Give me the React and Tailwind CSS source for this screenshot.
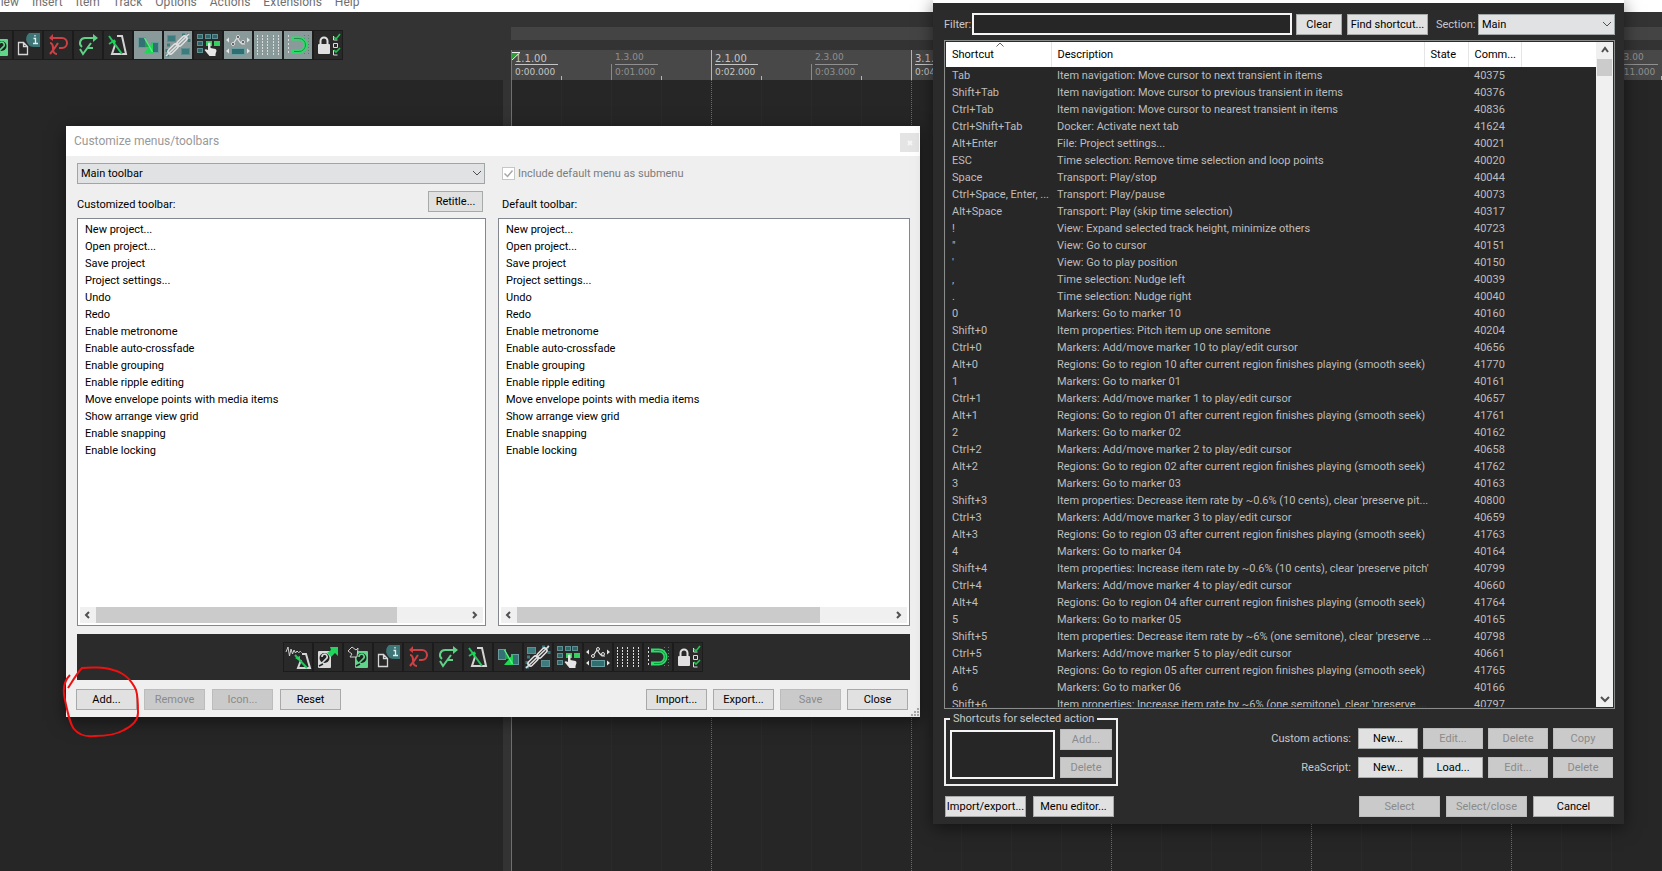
import React from "react";

/* ---------- toolbar icons (28 x 28 cells) ---------- */

const Metronome = () => (
  <g fill="none">
    <path d="M13 5h5l4 18H8l3-9" stroke="#d4d4d4" strokeWidth="2" />
    <path d="M5 5l13 18M5 13l6-4" stroke="#22c55e" strokeWidth="2" />
    <path d="M8 9l4 1-2 5z" fill="#1fd655" />
  </g>
);

const Disk = ({ color, x }) => (
  <g>
    <rect x={x} y="8" width="13" height="17" rx="1" fill={color} />
    <circle cx={x + 6.5} cy="15" r="5" fill="#222" />
    <path d={`M${x + 4} 14a2.6 2.6 0 1 1 4 2l-4 4`} fill="none" stroke={color} strokeWidth="1.600" />
    <path d={`M${x + 1} 23l4-2`} stroke="#222" strokeWidth="1.500" />
  </g>
);

const icons = {
  "New project": (
    <g fill="none">
      <path d="M2 9l2-5 1.500 9 1.500-7 1.500 5 1.500-4 1.500 3 1.500-2 1.500 1.500 2-1 1 1" stroke="#cfcfcf" />
      <path d="M18 11h4l4 14H14l3-8" stroke="#d4d4d4" strokeWidth="2" />
      <path d="M11 12l12 13" stroke="#22c55e" strokeWidth="2" />
      <path d="M11 15l5-2 0 5z" fill="#1fd655" />
    </g>
  ),
  "Open project": (
    <g>
      <Disk color="#d9d9d9" x={4} />
      <path d="M16 4h8v9l-3-3-4 4-4-4 4-3z" fill="#22d45b" />
    </g>
  ),
  "Save project": (
    <g>
      <Disk color="#5fd68a" x={11} />
      <path d="M13 14H6l2-3-4-3 4-4 4 3 2-2z" fill="#2a2a2a" stroke="#cfcfcf" />
    </g>
  ),
  "Project settings": (
    <g>
      <path d="M4.500 11.500h5l4 4v8h-9z M9.500 11.500v4h4" fill="none" stroke="#d6d6d6" strokeWidth="1.300" />
      <path d="M15 2h11v14h-5a8 8 0 0 1-6-14z" fill="#3e7678" />
      <path d="M19.500 7.500h2v5M19 12.500h5M21 4v1.500" fill="none" stroke="#e3f0f0" strokeWidth="1.300" />
    </g>
  ),
  Undo: (
    <g fill="none" stroke="#cf4045" strokeWidth="2">
      <path d="M6 7h12a5 5 0 0 1 0 10h-3" />
      <path d="M9 3l-4 4 4 3z" fill="#cf4045" stroke="none" />
      <path d="M6 12q3 0 3 5.500t4 5.500M14 12q-3 5-8 11" />
    </g>
  ),
  Redo: (
    <g fill="none" stroke="#5fd287" strokeWidth="2">
      <path d="M21 7H11a5 5 0 0 0-3 9" />
      <path d="M19 3l5 4-5 4z" fill="#5fd287" stroke="none" />
      <path d="M6 18l3 5 8-11M14 17h5" />
    </g>
  ),
  Metronome: <Metronome />,
  "Auto-crossfade": (
    <g>
      <rect x="4.500" y="6.500" width="7" height="10" fill="#337174" stroke="#69999b" />
      <rect x="17.500" y="11.500" width="7" height="10" fill="#337174" stroke="#69999b" />
      <path d="M10 22l9-11v11z" fill="#1fd655" />
      <path d="M11 7v9h5z" fill="#1fa545" />
      <path d="M10.500 7l8 14" stroke="#5ff08a" strokeWidth="1.300" />
    </g>
  ),
  Grouping: (
    <g>
      <g fill="#3c7c7e" stroke="#5b9092">
        <rect x="3.500" y="4.500" width="8" height="6" />
        <rect x="17.500" y="17.500" width="8" height="6" />
      </g>
      <path d="M18 4h7M25 8v4M3 18v6h4M3 14h3" stroke="#3c7c7e" strokeWidth="3" strokeDasharray="3 2" fill="none" />
      <g fill="none" stroke="#e0e0e0">
        <path d="M2 25L25 3" strokeWidth="1.600" />
        <rect x="3" y="15.500" width="12" height="5" rx="2.500" transform="rotate(-45 9 18)" strokeWidth="1.600" />
        <rect x="12" y="7.500" width="12" height="5" rx="2.500" transform="rotate(-45 18 10)" strokeWidth="1.600" />
      </g>
    </g>
  ),
  "Ripple editing": (
    <g>
      <g fill="#2f6668" stroke="#5f8f92">
        <rect x="3.500" y="3.500" width="5" height="4" />
        <rect x="11.500" y="3.500" width="5" height="4" />
        <rect x="18.500" y="3.500" width="5" height="4" />
        <rect x="3.500" y="10.500" width="5" height="4" />
        <rect x="3.500" y="17.500" width="5" height="4" />
      </g>
      <path d="M12 10h6v5h-6zM20 10h6v5h-6z" fill="#35d160" />
      <path d="M14 12q1.500-1 2.500 0v5l5 1q1 .5 1 2l-1 3v2h-6l-5-6q1-1.500 3.500 0z" fill="#e6e6e6" />
    </g>
  ),
  "Envelope points": (
    <g>
      <path d="M7 13h2l4-6 3 4 2 2h3" fill="none" stroke="#e2e2e2" strokeWidth="1.200" />
      <g fill="#333" stroke="#e2e2e2">
        <circle cx="9" cy="13" r="1.500" />
        <circle cx="14" cy="6" r="1.500" />
        <circle cx="19" cy="11" r="1.500" />
      </g>
      <path d="M5 6.500v5L2 9zM23 6.500v5l3-2.500zM5 17.500v5L2 20zM23 17.500v5l3-2.500z" fill="#e6e6e6" />
      <rect x="7.500" y="17.500" width="13" height="6" fill="#2f6f72" stroke="#6b9fa1" />
    </g>
  ),
  Grid: (
    <path
      d="M3.500 4v20M8.500 4v20M13.500 4v20M19.500 4v20M24.500 4v20"
      stroke="#dcdcdc"
      strokeDasharray="2 1"
      fill="none"
    />
  ),
  Snapping: (
    <g fill="none">
      <path d="M4.500 4v20" stroke="#dcdcdc" strokeDasharray="2 2" />
      <path d="M20.500 4v20M24.500 4v20" stroke="#4f8564" strokeDasharray="1 2" />
      <path d="M7 7.500h8a6 6 0 0 1 0 13H7" stroke="#2edb68" strokeWidth="4" />
      <path d="M10 7.500h5a6 6 0 0 1 0 13h-5" stroke="#1f8f48" />
    </g>
  ),
  Locking: (
    <g fill="none">
      <rect x="4" y="13" width="12" height="10" rx="1" fill="#e0e0e0" />
      <path d="M6.500 13v-3a3.500 3.500 0 0 1 7 0v3" stroke="#e0e0e0" strokeWidth="2" />
      <path d="M19.500 5v4h4M19.500 12.500h4v4h-4zM19.500 19v5h4" stroke="#dcdcdc" />
      <path d="M20 6l2 2 4-5M20 19l2 2 4-4" stroke="#26c153" strokeWidth="1.600" />
    </g>
  ),
};

const iconNames = Object.keys(icons);
const lit = ["Auto-crossfade", "Grouping", "Envelope points", "Grid", "Snapping"];

function IconButton({ name, active }) {
  return (
    <button
      type="button"
      aria-label={name}
      className={`h-7 w-7 shrink-0 ${active ? "bg-[#8a9a9a]" : "bg-[#292929]"}`}
    >
      <svg viewBox="0 0 28 28" className="block h-7 w-7">
        {icons[name]}
      </svg>
    </button>
  );
}

/* ---------- shared controls ---------- */

function Btn({ children, disabled, className = "w-[61px]" }) {
  return (
    <button
      type="button"
      disabled={disabled}
      className={`h-[21px] shrink-0 border text-center leading-[19px] whitespace-nowrap ${
        disabled ? "border-[#bcbcbc] bg-[#cacaca] text-[#8b8b8b]" : "border-[#a8aaaa] bg-[#e1e1e1] text-black"
      } ${className}`}
    >
      {children}
    </button>
  );
}

function Chevron({ d, className = "h-4 w-4", width = 1 }) {
  return (
    <svg viewBox="0 0 16 16" className={className} fill="none" stroke="#505050" strokeWidth={width}>
      <path d={d} />
    </svg>
  );
}
const DOWN = "M4 6l4 4 4-4";
const UP = "M5 10l3-4 3 4";
const LEFT = "M9 5L6 8l3 3";
const RIGHT = "M6 5l3 3-3 3";

function Dropdown({ id, label, value, className }) {
  return (
    <div className={`relative ${className}`}>
      <select
        id={id}
        aria-label={label}
        className="block h-[21px] w-full appearance-none border border-[#a0a5a6] bg-[#e1e2e3] pl-[3px] text-black"
      >
        <option>{value}</option>
      </select>
      <Chevron d={DOWN} className="pointer-events-none absolute top-[2px] right-0 h-4 w-4" />
    </div>
  );
}

/* ---------- arrange view behind the windows ---------- */

const menus = ["View", "Insert", "Item", "Track", "Options", "Actions", "Extensions", "Help"];
const measures = [1, 2, 3, 4, 5, 6];

function RulerHalf({ beat, time, major }) {
  return (
    <div
      className={`relative flex h-full w-[100px] shrink-0 items-end ${major ? "border-l border-[#b5b5b5]" : ""}`}
    >
      {!major && <span className="h-4 w-px bg-[#8a8a8a]" />}
      <span
        className={`ml-[3px] flex h-full w-[43px] flex-col pt-1 leading-none ${
          major ? "text-[#c4c4c4]" : "text-[#909090]"
        }`}
      >
        <span className={`h-[10px] ${major ? "text-[10px] leading-[10px]" : "text-[9px] leading-[6px]"}`}>{beat}</span>
        <span className="h-px bg-current" />
        <span className="pt-[2px] text-[9px] leading-[11px]">{time}</span>
      </span>
      <span className="ml-[3px] h-1 w-px bg-[#b5b5b5]" />
    </div>
  );
}

function Workspace() {
  return (
    <div className="flex min-h-screen flex-col bg-[#262626]">
      <nav className="h-3 overflow-hidden bg-white font-[Roboto,'Noto_Sans',sans-serif] text-[12px] leading-[16px] text-[#6f6f6f]">
        <ul className="-mt-[6px] -ml-[7px] flex gap-[13px]">
          {menus.map((m) => (
            <li key={m}>{m}</li>
          ))}
        </ul>
      </nav>
      <div className="flex grow">
        <div className="flex w-[503px] shrink-0 flex-col">
          <div className="flex h-[68px] items-start overflow-hidden bg-[#333]">
            <div className="mt-[18px] -ml-[17px] flex gap-[2px] bg-[#1c1c1c] p-px">
              {iconNames.slice(2).map((n) => (
                <IconButton key={n} name={n} active={lit.includes(n)} />
              ))}
            </div>
          </div>
        </div>
        <div className="w-2 shrink-0 bg-[#333]" />
        <div className="flex min-w-0 grow flex-col overflow-hidden font-['DejaVu_Sans',sans-serif]">
          <div className="h-[38px] bg-[#333] pt-[15px]">
            <div className="h-[13px] bg-[#444]" />
          </div>
          <div className="relative flex h-[30px] bg-[#484848]">
            {measures.map((m) => (
              <React.Fragment key={m}>
                <RulerHalf major beat={`${m}.1.00`} time={`0:${String(m * 2 - 2).padStart(2, "0")}.000`} />
                <RulerHalf beat={`${m}.3.00`} time={`0:${String(m * 2 - 1).padStart(2, "0")}.000`} />
              </React.Fragment>
            ))}
            <svg className="absolute top-[2px] left-0 h-2 w-[10px]" viewBox="0 0 10 8">
              <path d="M0 0h9L0 8z" fill="#2f9e3a" />
              <path d="M0 .5h9L1 8" fill="none" stroke="#f0f0f0" />
            </svg>
            <span className="absolute top-0 left-0 h-full w-px bg-[#27b427]" />
          </div>
          <div className="flex grow">
            {measures.map((m) => (
              <div
                key={m}
                className={`flex w-[200px] shrink-0 border-l ${
                  m === 1 ? "border-[#1fa81f]" : "border-dotted border-[#6a6a6a]"
                }`}
              >
                <div className="grow border-r border-[#2a2a2a]" />
                <div className="grow border-r border-[#2a2a2a]" />
                <div className="grow border-r border-[#2a2a2a]" />
                <div className="grow" />
              </div>
            ))}
          </div>
        </div>
      </div>
    </div>
  );
}

/* ---------- Customize menus/toolbars ---------- */

const toolbarItems = [
  "New project...",
  "Open project...",
  "Save project",
  "Project settings...",
  "Undo",
  "Redo",
  "Enable metronome",
  "Enable auto-crossfade",
  "Enable grouping",
  "Enable ripple editing",
  "Move envelope points with media items",
  "Show arrange view grid",
  "Enable snapping",
  "Enable locking",
];

function ItemList() {
  return (
    <div className="flex h-[408px] flex-col justify-between border border-[#828790] bg-white p-[2px]">
      <ul className="pl-[5px]">
        {toolbarItems.map((t) => (
          <li key={t} className="h-[17px] leading-[17px]">
            {t}
          </li>
        ))}
      </ul>
      <div className="flex h-4 items-center bg-[#f0f0f0]">
        <Chevron d={LEFT} width={2} />
        <div className="flex h-full grow">
          <div className="h-full w-[81%] bg-[#cbcbcb]" />
        </div>
        <Chevron d={RIGHT} width={2} />
      </div>
    </div>
  );
}

function CustomizeWindow() {
  return (
    <section className="absolute top-[126px] left-[66px] w-[854px] bg-[#efefef] text-black shadow-[0_4px_16px_rgba(0,0,0,0.5)]">
      <header className="flex h-[30px] items-center justify-between bg-white pr-px pl-2">
        <h2 className="font-[Roboto,'Noto_Sans',sans-serif] text-[12px] text-[#999]">Customize menus/toolbars</h2>
        <button type="button" aria-label="Close window" className="mt-[3px] flex h-[19px] w-[19px] items-center justify-center bg-[#e4e4e4]">
          <svg viewBox="0 0 8 8" className="h-2 w-2" stroke="#f6f6f6" strokeWidth="2">
            <path d="M2 2l4 4M6 2L2 6" />
          </svg>
        </button>
      </header>
      <div className="pt-[7px] pr-[10px] pb-[7px] pl-[11px]">
        <div className="grid grid-cols-[409px_1fr] gap-x-3">
          <Dropdown label="Menu or toolbar" value="Main toolbar" className="w-[408px]" />
          <label className="flex items-center gap-[3px] pl-1 text-[#7c7c7c]">
            <input type="checkbox" defaultChecked disabled className="peer sr-only" />
            <svg viewBox="0 0 13 13" className="h-[13px] w-[13px]" fill="none">
              <rect x="0.500" y="0.500" width="12" height="12" fill="#fff" stroke="#c6c6c6" />
              <path d="M2.500 6.500l3 3 5-6" stroke="#a8a8a8" strokeWidth="1.500" />
            </svg>
            Include default menu as submenu
          </label>
          <div className="flex h-[34px] items-center justify-between pr-[3px]">
            <h3 className="pt-[6px]">Customized toolbar:</h3>
            <Btn className="w-[55px]">Retitle...</Btn>
          </div>
          <h3 className="flex h-[34px] items-center pt-[6px] pl-1">Default toolbar:</h3>
          <ItemList />
          <ItemList />
        </div>
        <div className="mt-2 flex h-[46px] items-center justify-center bg-[#2b2b2b] pr-[2px]">
          <div className="flex gap-[2px] bg-[#1c1c1c] p-px">
            {iconNames.map((n) => (
              <IconButton key={n} name={n} />
            ))}
          </div>
        </div>
        <div className="mt-[9px] -ml-px flex justify-between pr-[2px]">
          <div className="flex gap-[7px]">
            <Btn>Add...</Btn>
            <Btn disabled>Remove</Btn>
            <Btn disabled>Icon...</Btn>
            <Btn>Reset</Btn>
          </div>
          <div className="flex gap-[6px]">
            <Btn>Import...</Btn>
            <Btn>Export...</Btn>
            <Btn disabled>Save</Btn>
            <Btn>Close</Btn>
          </div>
        </div>
      </div>
      <svg viewBox="0 0 9 9" className="absolute right-0 bottom-0 h-[9px] w-[9px]" fill="#a9a9a9">
        <path d="M6 0h2v2H6zM3 3h2v2H3zM6 3h2v2H6zM0 6h2v2H0zM3 6h2v2H3zM6 6h2v2H6z" />
      </svg>
      <svg viewBox="0 0 80 74" className="pointer-events-none absolute top-[538px] -left-1 h-[74px] w-20" fill="none" stroke="#ee1111" strokeWidth="2">
        <path d="M8 11C2 17 0 24 3 36c3 14 5 24 9 29 4 5 10 8 20 7 10 0 22-1 30-6 10-5 14-10 14-17 0-8 0-17-2-23-5-11-14-18-23-20C42 3 28 3 20 4c-4 4-7 9-14 20" />
      </svg>
    </section>
  );
}

/* ---------- Actions ---------- */

const seek = "after current region finishes playing (smooth seek)";
const actions = [
  ["Tab", "Item navigation: Move cursor to next transient in items", "40375"],
  ["Shift+Tab", "Item navigation: Move cursor to previous transient in items", "40376"],
  ["Ctrl+Tab", "Item navigation: Move cursor to nearest transient in items", "40836"],
  ["Ctrl+Shift+Tab", "Docker: Activate next tab", "41624"],
  ["Alt+Enter", "File: Project settings...", "40021"],
  ["ESC", "Time selection: Remove time selection and loop points", "40020"],
  ["Space", "Transport: Play/stop", "40044"],
  ["Ctrl+Space, Enter, ...", "Transport: Play/pause", "40073"],
  ["Alt+Space", "Transport: Play (skip time selection)", "40317"],
  ["!", "View: Expand selected track height, minimize others", "40723"],
  ['"', "View: Go to cursor", "40151"],
  ["'", "View: Go to play position", "40150"],
  [",", "Time selection: Nudge left", "40039"],
  [".", "Time selection: Nudge right", "40040"],
  ["0", "Markers: Go to marker 10", "40160"],
  ["Shift+0", "Item properties: Pitch item up one semitone", "40204"],
  ["Ctrl+0", "Markers: Add/move marker 10 to play/edit cursor", "40656"],
  ["Alt+0", `Regions: Go to region 10 ${seek}`, "41770"],
  ["1", "Markers: Go to marker 01", "40161"],
  ["Ctrl+1", "Markers: Add/move marker 1 to play/edit cursor", "40657"],
  ["Alt+1", `Regions: Go to region 01 ${seek}`, "41761"],
  ["2", "Markers: Go to marker 02", "40162"],
  ["Ctrl+2", "Markers: Add/move marker 2 to play/edit cursor", "40658"],
  ["Alt+2", `Regions: Go to region 02 ${seek}`, "41762"],
  ["3", "Markers: Go to marker 03", "40163"],
  ["Shift+3", "Item properties: Decrease item rate by ~0.6% (10 cents), clear 'preserve pit...", "40800"],
  ["Ctrl+3", "Markers: Add/move marker 3 to play/edit cursor", "40659"],
  ["Alt+3", `Regions: Go to region 03 ${seek}`, "41763"],
  ["4", "Markers: Go to marker 04", "40164"],
  ["Shift+4", "Item properties: Increase item rate by ~0.6% (10 cents), clear 'preserve pitch'", "40799"],
  ["Ctrl+4", "Markers: Add/move marker 4 to play/edit cursor", "40660"],
  ["Alt+4", `Regions: Go to region 04 ${seek}`, "41764"],
  ["5", "Markers: Go to marker 05", "40165"],
  ["Shift+5", "Item properties: Decrease item rate by ~6% (one semitone), clear 'preserve ...", "40798"],
  ["Ctrl+5", "Markers: Add/move marker 5 to play/edit cursor", "40661"],
  ["Alt+5", `Regions: Go to region 05 ${seek}`, "41765"],
  ["6", "Markers: Go to marker 06", "40166"],
  ["Shift+6", "Item properties: Increase item rate by ~6% (one semitone), clear 'preserve ...", "40797"],
];

function ActionTable() {
  return (
    <div className="mt-[5px] flex h-[669px] border border-[#8a8c8c] p-px">
      <div className="min-w-0 grow overflow-hidden bg-[#272727]">
        <table className="w-full table-fixed border-collapse text-left whitespace-nowrap">
          <colgroup>
            <col className="w-[105px]" />
            <col className="w-[373px]" />
            <col className="w-[44px]" />
            <col className="w-[53px]" />
            <col />
          </colgroup>
          <thead className="bg-white text-black">
            <tr className="h-[25px]">
              <th className="relative border-r border-[#e5e5e5] p-0 pl-[6px] font-normal">
                Shortcut
                <svg viewBox="0 0 8 5" className="absolute top-0 left-[50px] h-[5px] w-2" fill="none" stroke="#666">
                  <path d="M.5 4.500L4 1l3.500 3.500" />
                </svg>
              </th>
              <th className="border-r border-[#e5e5e5] p-0 pl-[6px] font-normal">Description</th>
              <th className="border-r border-[#e5e5e5] p-0 pl-[6px] font-normal">State</th>
              <th className="border-r border-[#e5e5e5] p-0 pl-[6px] font-normal">Comm...</th>
              <td />
            </tr>
          </thead>
          <tbody className="text-[#bdbdbd]">
            {actions.map(([key, text, id]) => (
              <tr key={id} className="h-[17px]">
                <td className="p-0 pl-[6px]">{key}</td>
                <td className="p-0 pl-[6px]">{text}</td>
                <td />
                <td className="p-0 pl-[6px]">{id}</td>
                <td />
              </tr>
            ))}
          </tbody>
        </table>
      </div>
      <div className="flex w-[17px] shrink-0 flex-col items-center bg-[#f0f0f0]">
        <Chevron d={UP} width={2} />
        <div className="mt-px h-[17px] w-[15px] bg-[#cbcbcb]" />
        <div className="grow" />
        <Chevron d={DOWN} width={2} />
      </div>
    </div>
  );
}

function ActionsWindow() {
  return (
    <section className="absolute top-0 left-[933px] w-[691px] border-t-[3px] border-white bg-[#2b2b2b] text-[#c8c8c8] shadow-[0_4px_16px_rgba(0,0,0,0.5)]">
      <div className="px-[9px] pt-[10px] pb-[7px] pl-[11px]">
        <div className="flex items-center">
          <label htmlFor="filter" className="w-7">
            Filter:
          </label>
          <input
            id="filter"
            type="text"
            className="h-[22px] min-w-0 grow border-2 border-[#f4f4f4] bg-[#262626] px-1 text-[#ddd] outline-none"
          />
          <Btn className="ml-1 w-[46px]">Clear</Btn>
          <Btn className="ml-[5px] w-[81px]">Find shortcut...</Btn>
          <label htmlFor="section" className="ml-2 w-[42px]">
            Section:
          </label>
          <Dropdown id="section" value="Main" className="w-[137px]" />
        </div>
        <ActionTable />
        <div className="mt-[2px] flex items-start justify-between pr-[2px]">
          <fieldset className="flex h-[75px] w-[174px] gap-[5px] border-2 border-[#efefef] px-1">
            <legend className="px-[3px] leading-[15px]">Shortcuts for selected action</legend>
            <div className="mt-1 h-[49px] w-[105px] border-2 border-[#f4f4f4] bg-[#262626]" />
            <div className="mt-[3px] flex flex-col gap-[7px]">
              <Btn disabled className="w-[52px]">
                Add...
              </Btn>
              <Btn disabled className="w-[52px]">
                Delete
              </Btn>
            </div>
          </fieldset>
          <div className="mt-[17px] grid grid-cols-[auto_repeat(4,60px)] items-center gap-x-[5px] gap-y-2">
            <span className="pr-[2px] text-right">Custom actions:</span>
            <Btn className="w-full">New...</Btn>
            <Btn disabled className="w-full">
              Edit...
            </Btn>
            <Btn disabled className="w-full">
              Delete
            </Btn>
            <Btn disabled className="w-full">
              Copy
            </Btn>
            <span className="pr-[2px] text-right">ReaScript:</span>
            <Btn className="w-full">New...</Btn>
            <Btn className="w-full">Load...</Btn>
            <Btn disabled className="w-full">
              Edit...
            </Btn>
            <Btn disabled className="w-full">
              Delete
            </Btn>
          </div>
        </div>
        <div className="mt-[10px] flex justify-between">
          <div className="flex gap-[7px] pl-px">
            <Btn className="w-[81px]">Import/export...</Btn>
            <Btn className="w-[81px]">Menu editor...</Btn>
          </div>
          <div className="flex gap-[6px] pr-px">
            <Btn disabled className="w-[81px]">
              Select
            </Btn>
            <Btn disabled className="w-[81px]">
              Select/close
            </Btn>
            <Btn className="w-[81px]">Cancel</Btn>
          </div>
        </div>
      </div>
    </section>
  );
}

export default function App() {
  return (
    <main className="relative min-h-screen overflow-hidden font-[Roboto,'Liberation_Sans',sans-serif] text-[11px] leading-[15px]">
      <Workspace />
      <CustomizeWindow />
      <ActionsWindow />
    </main>
  );
}
